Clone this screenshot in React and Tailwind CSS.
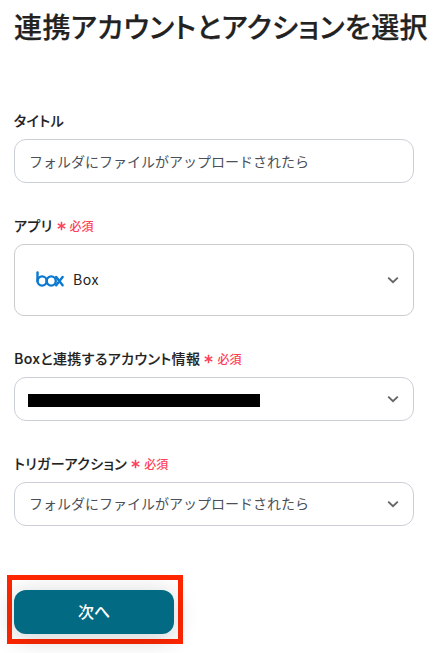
const font =
  "font-['Noto_Sans_CJK_JP',sans-serif]";

function Chevron() {
  return (
    <svg width="12" height="8" viewBox="0 0 12 8" fill="none" stroke="#666" strokeWidth="1.9" className="mr-[14px] shrink-0">
      <path d="M1.2 1.6 6 6.2l4.8-4.6" />
    </svg>
  );
}

function Label({ children, required }) {
  return (
    <div className="-mt-px flex h-[21px] items-start whitespace-nowrap">
      <span className="text-[14px] leading-5 font-medium text-[#222] [font-feature-settings:'palt'] tracking-[0.4px] [-webkit-text-stroke:0.12px_#222]">{children}</span>
      {required && (
        <span className="ml-1 flex items-center pt-px text-[12px] leading-5 font-medium text-[#ff4258]">
          <svg width="9" height="10" viewBox="0 0 9 10" stroke="#ff4258" strokeWidth="1.5" className="mr-1">
            <path d="M4.5.8v8.4M.7 2.9l7.6 4.2M8.3 2.9.7 7.1" />
          </svg>
          必須
        </span>
      )}
    </div>
  );
}

function BoxLogo() {
  return (
    <svg width="28" height="16" viewBox="0 0 28 16" fill="none" stroke="#0b79d0" strokeWidth="2.4" strokeLinecap="round" className="-mt-0.5">
      <path d="M1.5 1.5v8.5" />
      <circle cx="6.1" cy="10" r="4.6" />
      <circle cx="15.2" cy="10" r="4.6" />
      <path d="m20.2 6 6.4 8.3M26.6 6l-6.4 8.3" />
    </svg>
  );
}

export default function App() {
  return (
    <main lang="ja" className={`${font} h-[653px] w-[445px] overflow-hidden bg-white pl-[14px]`}>
      <h1 className="h-[111px] pt-[6px] text-[28px] leading-10 font-medium tracking-[0.4px] whitespace-nowrap text-[#222] [font-feature-settings:'palt'] [-webkit-text-stroke:0.25px_#222]">
        連携アカウントとアクションを選択
      </h1>
      <Label>タイトル</Label>
      <div className="mt-2 mb-[33px] flex h-11 w-[400px] items-center rounded-xl border border-[#cbd0d8] pl-[14px] text-[14px] text-[#4b5058]">
        フォルダにファイルがアップロードされたら
      </div>
      <Label required>アプリ</Label>
      <div className="mt-2 mb-[33px] flex h-[72px] w-[400px] items-center rounded-[10px] border border-[#ccc] pl-[21px]">
        <BoxLogo />
        <span className="ml-[9px] flex-1 pb-px text-[14px] tracking-[0.6px] text-[#222]">Box</span>
        <Chevron />
      </div>
      <Label required>Boxと連携するアカウント情報</Label>
      <div className="mt-2 mb-[33px] flex h-11 w-[400px] items-center justify-between rounded-xl border border-[#cbd0d8] pl-[13px]">
        <div className="mt-0.5 h-[13px] w-[232px] bg-black" />
        <Chevron />
      </div>
      <Label required>トリガーアクション</Label>
      <div className="mt-2 flex h-11 w-[400px] items-center justify-between rounded-xl border border-[#cbd0d8] pl-[14px] text-[14px] text-[#4b5058]">
        <span className="pb-0.5">フォルダにファイルがアップロードされたら</span>
        <Chevron />
      </div>
      <div className="mt-[49px] -ml-[7px] h-[69px] w-[176px] border-[5px] border-[#ff2600] pt-[10px] pl-[2px]">
        <button className="block h-11 w-40 rounded-xl bg-[#036a84] pb-0.5 text-[16px] font-medium text-white shadow-[0_4px_24px_rgba(0,20,30,0.2)]">
          次へ
        </button>
      </div>
    </main>
  );
}
